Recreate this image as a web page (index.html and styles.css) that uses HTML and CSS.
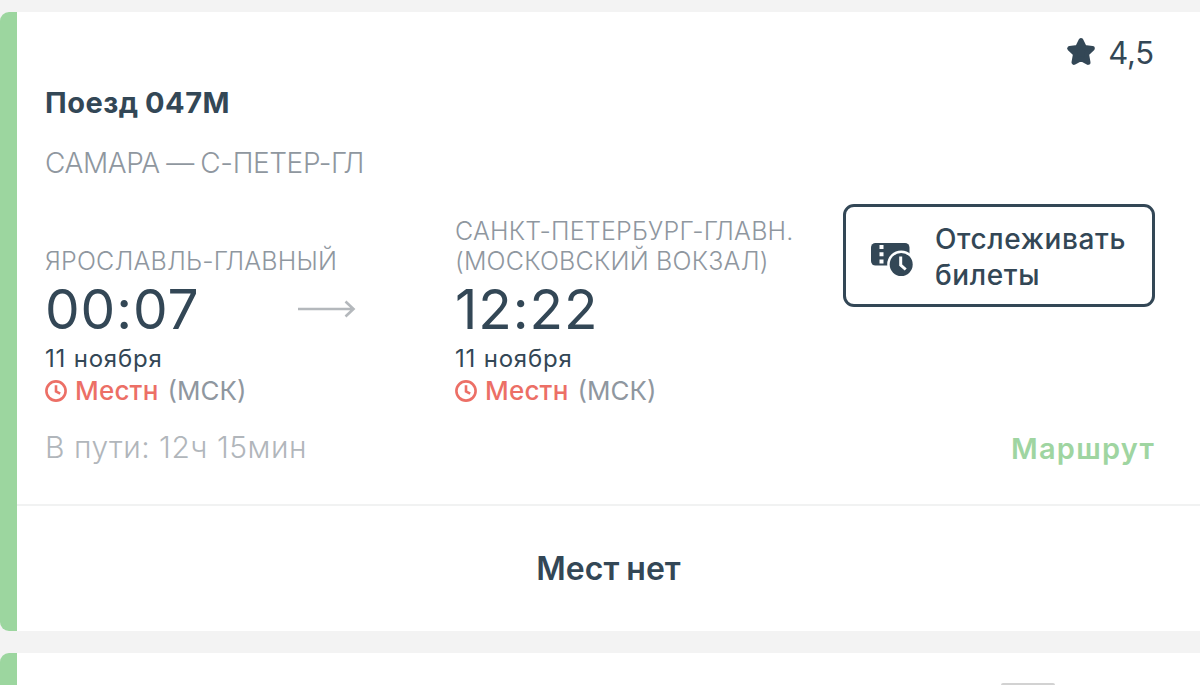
FILE: index.html
```
<!DOCTYPE html>
<html lang="ru">
<head>
    <meta charset="UTF-8">
    <title>Поезд 047М</title>
    <link rel="stylesheet" href="styles.css">
</head>
<body>
    <div class="card">
        <div class="card-body">
            <div class="rating">
                <svg class="star-icon" viewBox="0 0 30 30" fill="currentColor" stroke="currentColor" stroke-width="5" stroke-linejoin="round">
                    <path d="M15 3.500l3.400 7 7.900 1-5.800 5.500 1.500 8.400-7-3.900-7 3.900 1.500-8.400-5.800-5.500 7.900-1z"></path>
                </svg>
                <span class="rating-value">4,5</span>
            </div>
            <h2 class="title">Поезд 047М</h2>
            <div class="direction">САМАРА — С-ПЕТЕР-ГЛ</div>

            <div class="trip">
                <div class="stop stop-from">
                    <div class="station">ЯРОСЛАВЛЬ-ГЛАВНЫЙ</div>
                    <div class="time">00:07</div>
                    <div class="date">11 ноября</div>
                    <div class="zone">
                        <svg class="clock-icon" viewBox="0 0 22 22" fill="none" stroke="currentColor" stroke-width="2.6">
                            <circle cx="11" cy="11" r="9.6"></circle>
                            <path d="M11 5.2v6.3l4.2 2.2"></path>
                        </svg>
                        <span class="zone-local">Местн</span>
                        <span class="zone-msk">(МСК)</span>
                    </div>
                </div>
                <svg class="arrow-icon" viewBox="0 0 58 18" fill="none" stroke="currentColor" stroke-width="2.6">
                    <path d="M0 9h55.500M47.500 1.500l8 7.500-8 7.500"></path>
                </svg>
                <div class="stop stop-to">
                    <div class="station">САНКТ-ПЕТЕРБУРГ-ГЛАВН.<br>(МОСКОВСКИЙ ВОКЗАЛ)</div>
                    <div class="time">12:22</div>
                    <div class="date">11 ноября</div>
                    <div class="zone">
                        <svg class="clock-icon" viewBox="0 0 22 22" fill="none" stroke="currentColor" stroke-width="2.6">
                            <circle cx="11" cy="11" r="9.6"></circle>
                            <path d="M11 5.2v6.3l4.2 2.2"></path>
                        </svg>
                        <span class="zone-local">Местн</span>
                        <span class="zone-msk">(МСК)</span>
                    </div>
                </div>
                <button class="track-button">
                    <svg class="ticket-icon" viewBox="0 0 43 35">
                        <rect x="0" y="1" width="38.500" height="22.500" rx="4.500" fill="#334756"></rect>
                        <path d="M8.500 3h4v4h-4zM8.500 10.300h4v4h-4zM8.500 17.600h4v4h-4z" fill="#fff"></path>
                        <circle cx="30.200" cy="22.500" r="14" fill="#fff"></circle>
                        <circle cx="30.200" cy="22.500" r="11.500" fill="#334756"></circle>
                        <path d="M29.700 14.500v8.500l5 4.500" fill="none" stroke="#fff" stroke-width="3"></path>
                    </svg>
                    <span>Отслеживать<br>билеты</span>
                </button>
            </div>

            <div class="summary">
                <span class="duration">В пути: 12ч 15мин</span>
                <a class="route-link">Маршрут</a>
            </div>
        </div>
        <div class="card-footer">Мест нет</div>
    </div>

    <div class="card card-next">
        <div class="handle"></div>
    </div>
</body>
</html>
```
FILE: styles.css
```
body {
    margin: 0;
    background-color: #f3f3f3;
    color: #334756;
    font-family: Inter, Roboto, "Liberation Sans", sans-serif;
}

.card {
    box-sizing: border-box;
    height: 619px;
    margin-top: 12px;
    padding-left: 17px;
    border-radius: 9px 0 0 9px;
    background: linear-gradient(to right, #9cd69f 17px, #fff 17px);
    display: flex;
    flex-direction: column;
}

.card-next {
    height: 32px;
    margin-top: 22px;
    border-radius: 9px 0 0 0;
}

.card-body {
    box-sizing: border-box;
    height: 494px;
    padding: 20px 45px 0 28px;
    border-bottom: 2px solid #f1f2f2;
}

.rating {
    display: flex;
    justify-content: flex-end;
    align-items: center;
    gap: 12px;
    height: 40px;
}

.star-icon {
    width: 30px;
    height: 30px;
}

.rating-value {
    margin-right: 1px;
    padding-top: 2px;
    font-size: 31px;
    line-height: 40px;
    letter-spacing: -0.2px;
}

.title {
    margin: 11px 0 0;
    font-size: 29px;
    font-weight: 700;
    line-height: 40px;
    letter-spacing: 0.5px;
    word-spacing: -1px;
}

.direction {
    margin-top: 20px;
    font-size: 28px;
    font-weight: 300;
    line-height: 40px;
    letter-spacing: -0.4px;
    word-spacing: -1px;
    color: #8f979f;
}

.trip {
    display: flex;
    align-items: flex-start;
    margin-top: 21px;
    height: 203px;
}

.stop {
    display: flex;
    flex-direction: column;
    height: 203px;
    justify-content: flex-end;
    white-space: nowrap;
}

.stop-from {
    width: 253px;
}

.stop-to {
    width: 388px;
}

.station {
    font-size: 25px;
    font-weight: 300;
    line-height: 30px;
    letter-spacing: 0.2px;
    color: #8f979f;
}

.time {
    margin-top: 3px;
    font-size: 55px;
    line-height: 60px;
    letter-spacing: 0.9px;
}

.date {
    margin-top: 4px;
    font-size: 24px;
    line-height: 32px;
    letter-spacing: 0.8px;
}

.zone {
    display: flex;
    align-items: center;
    gap: 9px;
    font-size: 26px;
    line-height: 32px;
    color: #8f979f;
}

.clock-icon {
    width: 22px;
    height: 22px;
    color: #ec6f66;
}

.zone-local {
    margin-left: -1px;
    font-weight: 500;
    letter-spacing: 0.2px;
    color: #ec6f66;
}

.arrow-icon {
    width: 58px;
    height: 18px;
    margin: 96px 99px 0 0;
    color: #b4b8bc;
}

.track-button {
    box-sizing: border-box;
    display: flex;
    align-items: center;
    gap: 21px;
    width: 312px;
    height: 103px;
    padding: 2px 0 0 25px;
    border: 3px solid #334756;
    border-radius: 11px;
    background-color: #fff;
    color: #334756;
    font-family: inherit;
    font-size: 28px;
    font-weight: 500;
    line-height: 36px;
    letter-spacing: 0.6px;
    text-align: left;
    white-space: nowrap;
}

.ticket-icon {
    width: 43px;
    height: 35px;
    margin-top: 6px;
}

.summary {
    display: flex;
    justify-content: space-between;
    align-items: flex-start;
    margin-top: 20px;
    line-height: 40px;
}

.duration {
    font-size: 30px;
    font-weight: 300;
    letter-spacing: 0.5px;
    color: #b1b6bb;
}

.route-link {
    margin-top: 2px;
    font-size: 29px;
    font-weight: 600;
    letter-spacing: 1.2px;
    color: #9fd5a1;
}

.card-footer {
    flex: 1;
    display: flex;
    align-items: center;
    justify-content: center;
    font-size: 32px;
    font-weight: 600;
    word-spacing: -1px;
}

.handle {
    width: 54px;
    height: 2px;
    margin: 30px 0 0 984px;
    border-radius: 4px 4px 0 0;
    background-color: #d2d2d2;
}
```
